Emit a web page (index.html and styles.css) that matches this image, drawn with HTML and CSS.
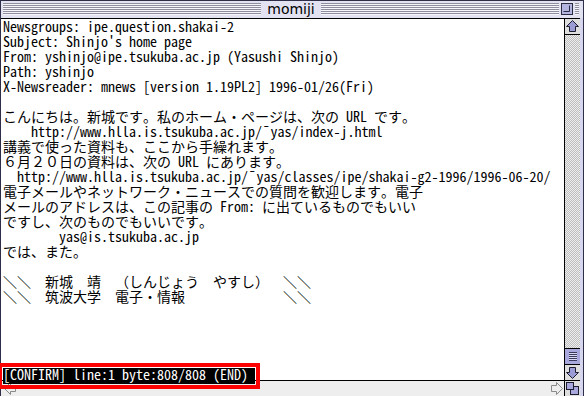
FILE: index.html
```html
<!DOCTYPE html>
<html lang="ja">
<head>
  <meta charset="UTF-8" />
  <title>momiji</title>
  <link rel="stylesheet" href="styles.css">
</head>
<body>
  <div class="window">
    <div class="titlebar">
      <div class="stripes"></div>
      <div class="title">momiji</div>
      <div class="stripes"></div>
      <div class="collapse">
        <svg width="12" height="12" viewBox="0 0 12 12">
          <rect x="0.5" y="0.5" width="11" height="11" fill="#b4b4e0" stroke="#2a2a40"/>
          <path d="M2.5 8.5 H8.5 V2.5" fill="none" stroke="#2a2a40"/>
        </svg>
      </div>
    </div>

    <div class="main">
      <div class="pane">
        <div class="article">
<pre class="lines">Newsgroups: ipe.question.shakai-2
Subject: Shinjo's home page
From: yshinjo@ipe.tsukuba.ac.jp (Yasushi Shinjo)
Path: yshinjo
X-Newsreader: mnews [version 1.19PL2] 1996-01/26(Fri)

こんにちは。新城です。私のホーム・ページは、次の URL です。
    http://www.hlla.is.tsukuba.ac.jp/¯yas/index-j.html
講義で使った資料も、ここから手繰れます。
６月２０日の資料は、次の URL にあります。
  http://www.hlla.is.tsukuba.ac.jp/¯yas/classes/ipe/shakai-g2-1996/1996-06-20/
電子メールやネットワーク・ニュースでの質問を歓迎します。電子
メールのアドレスは、この記事の From: に出ているものでもいい
ですし、次のものでもいいです。
        yas@is.tsukuba.ac.jp
では、また。

＼＼　新城　靖　（しんじょう　やすし）　＼＼
＼＼　筑波大学　電子・情報　　　　　　　＼＼</pre>
          <div class="statusline"><span class="status">[CONFIRM] line:1 byte:808/808 (END) </span></div>
        </div>

        <div class="vscroll">
          <div class="arrow-btn up">
            <svg width="15" height="15" viewBox="0 0 15 15">
              <polygon points="7.5,1.5 13.5,7.5 10.5,7.5 10.5,12.5 4.5,12.5 4.5,7.5 1.5,7.5" fill="#9c9cd4" stroke="#1c1c30"/>
            </svg>
          </div>
          <div class="track"></div>
          <div class="thumb"><span class="grip"></span></div>
          <div class="arrow-btn down">
            <svg width="15" height="15" viewBox="0 0 15 15">
              <polygon points="7.5,13.5 13.5,7.5 10.5,7.5 10.5,2.5 4.5,2.5 4.5,7.5 1.5,7.5" fill="#9c9cd4" stroke="#1c1c30"/>
            </svg>
          </div>
        </div>
      </div>

      <div class="hscroll">
        <svg class="harrow" width="15" height="15" viewBox="0 0 15 15">
          <polygon points="1.5,7.5 7.5,1.5 7.5,4.5 12.5,4.5 12.5,10.5 7.5,10.5 7.5,13.5" fill="none" stroke="#8a8a8a"/>
        </svg>
        <div class="htrack"></div>
        <svg class="harrow" width="15" height="15" viewBox="0 0 15 15">
          <polygon points="13.5,7.5 7.5,1.5 7.5,4.5 2.5,4.5 2.5,10.5 7.5,10.5 7.5,13.5" fill="none" stroke="#8a8a8a"/>
        </svg>
        <div class="growbox">
          <svg width="15" height="15" viewBox="0 0 15 15">
            <rect x="5.5" y="5.5" width="8" height="8" fill="#a8a8dc" stroke="#1c1c30"/>
            <rect x="1.5" y="1.5" width="7" height="7" fill="#a8a8dc" stroke="#1c1c30"/>
          </svg>
        </div>
      </div>
    </div>
  </div>
</body>
</html>
```

FILE: styles.css
```css
* {
  margin: 0;
  padding: 0;
  box-sizing: border-box;
}

body {
  width: 584px;
  height: 396px;
  overflow: hidden;
  background: #fff;
  color: #000;
}

.window {
  height: 396px;
  display: flex;
  flex-direction: column;
  border: 1px solid #2e2e48;
  border-bottom: none;
  background: #d6d6ee;
}

/* title bar */
.titlebar {
  position: relative;
  height: 17px;
  padding: 2px 4px 3px 2px;
  display: flex;
  align-items: stretch;
  background: #e2e2f0;
}

.stripes {
  flex: 1;
  background: repeating-linear-gradient(to bottom, #8e8e9e 0 1px, #f6f6fa 1px 2px);
}

.title {
  padding: 0 6px;
  font-family: "DejaVu Sans", sans-serif;
  font-size: 14px;
  line-height: 12px;
  color: #000;
}

.collapse {
  position: absolute;
  top: 2px;
  right: 10px;
  width: 12px;
  height: 12px;
  outline: 2px solid #e2e2f0;
}

.collapse svg {
  display: block;
}

/* main area */
.main {
  flex: 1;
  display: flex;
  flex-direction: column;
  border-top: 1px solid #000;
  margin-right: 3px;
  background: #fff;
}

.pane {
  flex: 1;
  display: flex;
}

.article {
  flex: 1;
  display: flex;
  flex-direction: column;
  padding-left: 2px;
  font-family: "Noto Sans Mono CJK JP", "Liberation Mono", monospace;
  font-size: 14px;
  text-spacing-trim: space-all;
}

.lines {
  flex: 1;
  font: inherit;
  line-height: 15px;
  white-space: pre;
}

.statusline {
  height: 16px;
}

/* highlighted status bar with red annotation frame */
.status {
  position: relative;
  display: inline-block;
  height: 16px;
  line-height: 12px;
  white-space: pre;
  background: #000;
  color: #fff;
  outline: 4px solid #ff0000;
  outline-offset: 1px;
}

/* vertical scroll bar */
.vscroll {
  width: 16px;
  display: flex;
  flex-direction: column;
  border-left: 1px solid #000;
}

.arrow-btn {
  height: 16px;
  background: #dedede;
}

.arrow-btn svg {
  display: block;
}

.up {
  border-bottom: 1px solid #000;
}

.down {
  border-top: 1px solid #000;
}

.track {
  flex: 1;
  background-color: #eeeeee;
  background-image: repeating-conic-gradient(#bdbdbd 0 25%, transparent 0 50%);
  background-size: 2px 2px;
}

.thumb {
  height: 16px;
  border-top: 1px solid #000;
  display: flex;
  align-items: center;
  justify-content: center;
  background: #a8a8dc;
}

.grip {
  width: 8px;
  height: 9px;
  background: repeating-linear-gradient(to bottom, #3a3a5a 0 1px, #d8d8f4 1px 2px);
}

/* horizontal scroll bar */
.hscroll {
  height: 16px;
  display: flex;
  border-top: 1px solid #000;
  background: #eeeeee;
}

.harrow {
  display: block;
  margin-left: 2px;
}

.htrack {
  flex: 1;
}

.growbox {
  width: 16px;
  border-left: 1px solid #000;
  background: #dedede;
}

.growbox svg {
  display: block;
}
```
